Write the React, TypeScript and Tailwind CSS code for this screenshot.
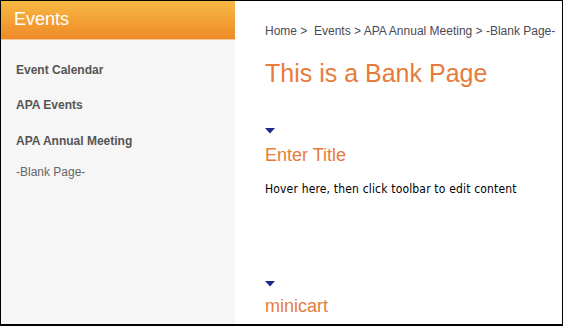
import React from "react";

const Tri = () => (
  <svg width="10" height="6" viewBox="0 0 10 6" className="block">
    <polygon points="0,0 10,0 5,5.5" fill="#1b2a8a" />
  </svg>
);

export default function App() {
  return (
    <div className="w-[563px] h-[326px] border-t border-l border-r border-b-2 border-black flex bg-white overflow-hidden" style={{ fontFamily: '"Liberation Sans", Arial, sans-serif' }}>
      <div className="w-[234px] bg-[#f6f6f6] flex flex-col shrink-0">
        <div className="h-[39px] bg-gradient-to-b from-[#f6b843] to-[#ee8a27] border-b border-[#f6c89a] pl-[13px] pt-[7px]">
          <span className="text-white text-[18px] leading-[22px]">Events</span>
        </div>
        <div className="pl-[15px] flex flex-col text-[12px] leading-[16px] text-[#555]">
          <div className="mt-[22px] font-bold">Event Calendar</div>
          <div className="mt-[19px] font-bold">APA Events</div>
          <div className="mt-[20px] font-bold">APA Annual Meeting</div>
          <div className="mt-[15px] text-[#666]">-Blank Page-</div>
        </div>
      </div>
      <div className="flex-1 pl-[30px] pt-[22px] flex flex-col items-start">
        <div className="text-[12px] leading-[16px] text-[#4a4a55] whitespace-nowrap">
          Home &gt;&nbsp; Events &gt; APA Annual Meeting &gt; -Blank Page-
        </div>
        <div className="mt-[20px] text-[25px] leading-[28px] text-[#e77b3c]">This is a Bank Page</div>
        <div className="mt-[41px]"><Tri /></div>
        <div className="mt-[10px] text-[18px] leading-[22px] text-[#e77b3c]">Enter Title</div>
        <div className="mt-[15px] text-[12px] leading-[16px] text-black whitespace-nowrap tracking-[0.17px]" style={{ fontFamily: '"DejaVu Sans Condensed", "DejaVu Sans", sans-serif' }}>
          Hover here, then click toolbar to edit content
        </div>
        <div className="mt-[84px]"><Tri /></div>
        <div className="mt-[8px] text-[18px] leading-[22px] text-[#e77b3c]">minicart</div>
      </div>
    </div>
  );
}
